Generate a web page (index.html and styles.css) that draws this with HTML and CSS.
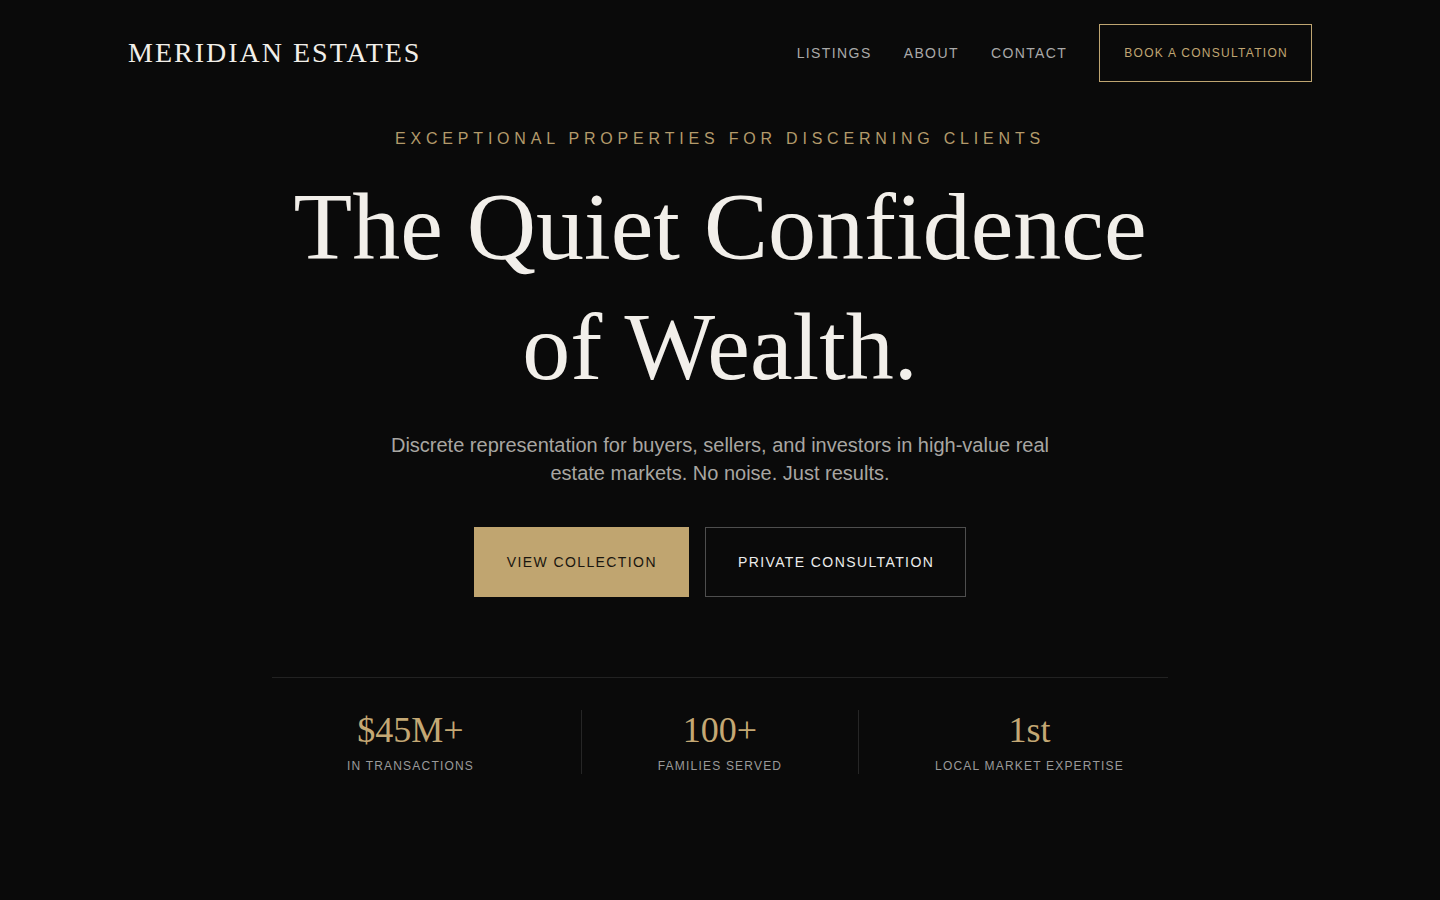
FILE: index.html
```html
<!DOCTYPE html>
<html lang="en">
<head>
<meta charset="utf-8">
<title>Meridian Estates</title>
<link rel="stylesheet" href="styles.css">
</head>
<body>
<header class="site-header">
  <a class="logo" href="#">MERIDIAN ESTATES</a>
  <nav class="nav">
    <a class="nav-link" href="#">LISTINGS</a>
    <a class="nav-link" href="#">ABOUT</a>
    <a class="nav-link" href="#">CONTACT</a>
    <a class="nav-cta" href="#">BOOK A CONSULTATION</a>
  </nav>
</header>
<main class="hero">
  <p class="eyebrow">EXCEPTIONAL PROPERTIES FOR DISCERNING CLIENTS</p>
  <h1 class="headline">The Quiet Confidence<br>of Wealth.</h1>
  <p class="lede">Discrete representation for buyers, sellers, and investors in high-value real estate markets. No noise. Just results.</p>
  <div class="actions">
    <a class="btn btn-gold" href="#">VIEW COLLECTION</a>
    <a class="btn btn-outline" href="#">PRIVATE CONSULTATION</a>
  </div>
  <section class="stats">
    <div class="stat">
      <div class="stat-value">$45M+</div>
      <div class="stat-label">IN TRANSACTIONS</div>
    </div>
    <div class="stat">
      <div class="stat-value">100+</div>
      <div class="stat-label">FAMILIES SERVED</div>
    </div>
    <div class="stat">
      <div class="stat-value">1st</div>
      <div class="stat-label">LOCAL MARKET EXPERTISE</div>
    </div>
  </section>
</main>
</body>
</html>
```
FILE: styles.css
```css
* { box-sizing: border-box; }
html, body { margin: 0; padding: 0; }
body {
  background: #0a0a0a;
  color: #f0ede8;
  font-family: "Liberation Sans", Arial, sans-serif;
  min-height: 900px;
}
a { text-decoration: none; color: inherit; }

.site-header {
  display: flex;
  align-items: center;
  justify-content: space-between;
  padding: 24px 128px 0;
}
.logo {
  font-family: "Liberation Serif", "Times New Roman", serif;
  font-size: 28px;
  letter-spacing: 2px;
  color: #f2efe9;
  line-height: 32px;
}
.nav {
  display: flex;
  align-items: center;
  gap: 32px;
}
.nav-link {
  font-size: 14px;
  letter-spacing: 1.4px;
  color: #a9a9a9;
  line-height: 20px;
}
.nav-cta {
  border: 1px solid #bfa571;
  color: #c0a672;
  font-size: 12px;
  letter-spacing: 1.28px;
  line-height: 16px;
  padding: 20px 23px 20px 24px;
}

.hero {
  display: flex;
  flex-direction: column;
  align-items: center;
  padding-top: 45px;
  text-align: center;
}
.eyebrow {
  margin: 0;
  font-size: 16px;
  line-height: 24px;
  letter-spacing: 4.8px;
  color: #b39a6a;
}
.headline {
  margin: 16px 0 0;
  font-family: "Liberation Serif", "Times New Roman", serif;
  font-weight: 400;
  font-size: 96px;
  line-height: 120px;
  color: #f2efea;
}
.lede {
  margin: 24px 0 0;
  max-width: 680px;
  font-size: 20px;
  line-height: 28px;
  color: #a8a6a2;
}
.actions {
  display: flex;
  gap: 16px;
  margin-top: 40px;
}
.btn {
  display: block;
  font-size: 14px;
  line-height: 20px;
  letter-spacing: 1.4px;
  padding: 24px 31px 24px 32px;
  border: 1px solid transparent;
}
.btn-gold {
  background: #c0a570;
  border-color: #c0a570;
  color: #1a160f;
}
.btn-outline {
  border-color: #4e4e4e;
  color: #ececec;
}

.stats {
  margin-top: 80px;
  width: 896px;
  border-top: 1px solid #222222;
  padding-top: 32px;
  display: grid;
  grid-template-columns: 309px 277px 310px;
}
.stat {
  padding: 0 32px;
  display: flex;
  flex-direction: column;
  align-items: center;
}
.stat:first-child { padding-left: 0; }
.stat:last-child { padding-right: 0; }
.stat + .stat { border-left: 1px solid #262626; }
.stat-value {
  font-family: "Liberation Serif", "Times New Roman", serif;
  font-size: 36px;
  line-height: 40px;
  color: #c4a874;
}
.stat-label {
  margin-top: 8px;
  font-size: 12px;
  line-height: 16px;
  letter-spacing: 1.2px;
  color: #9a9a9a;
}
```
